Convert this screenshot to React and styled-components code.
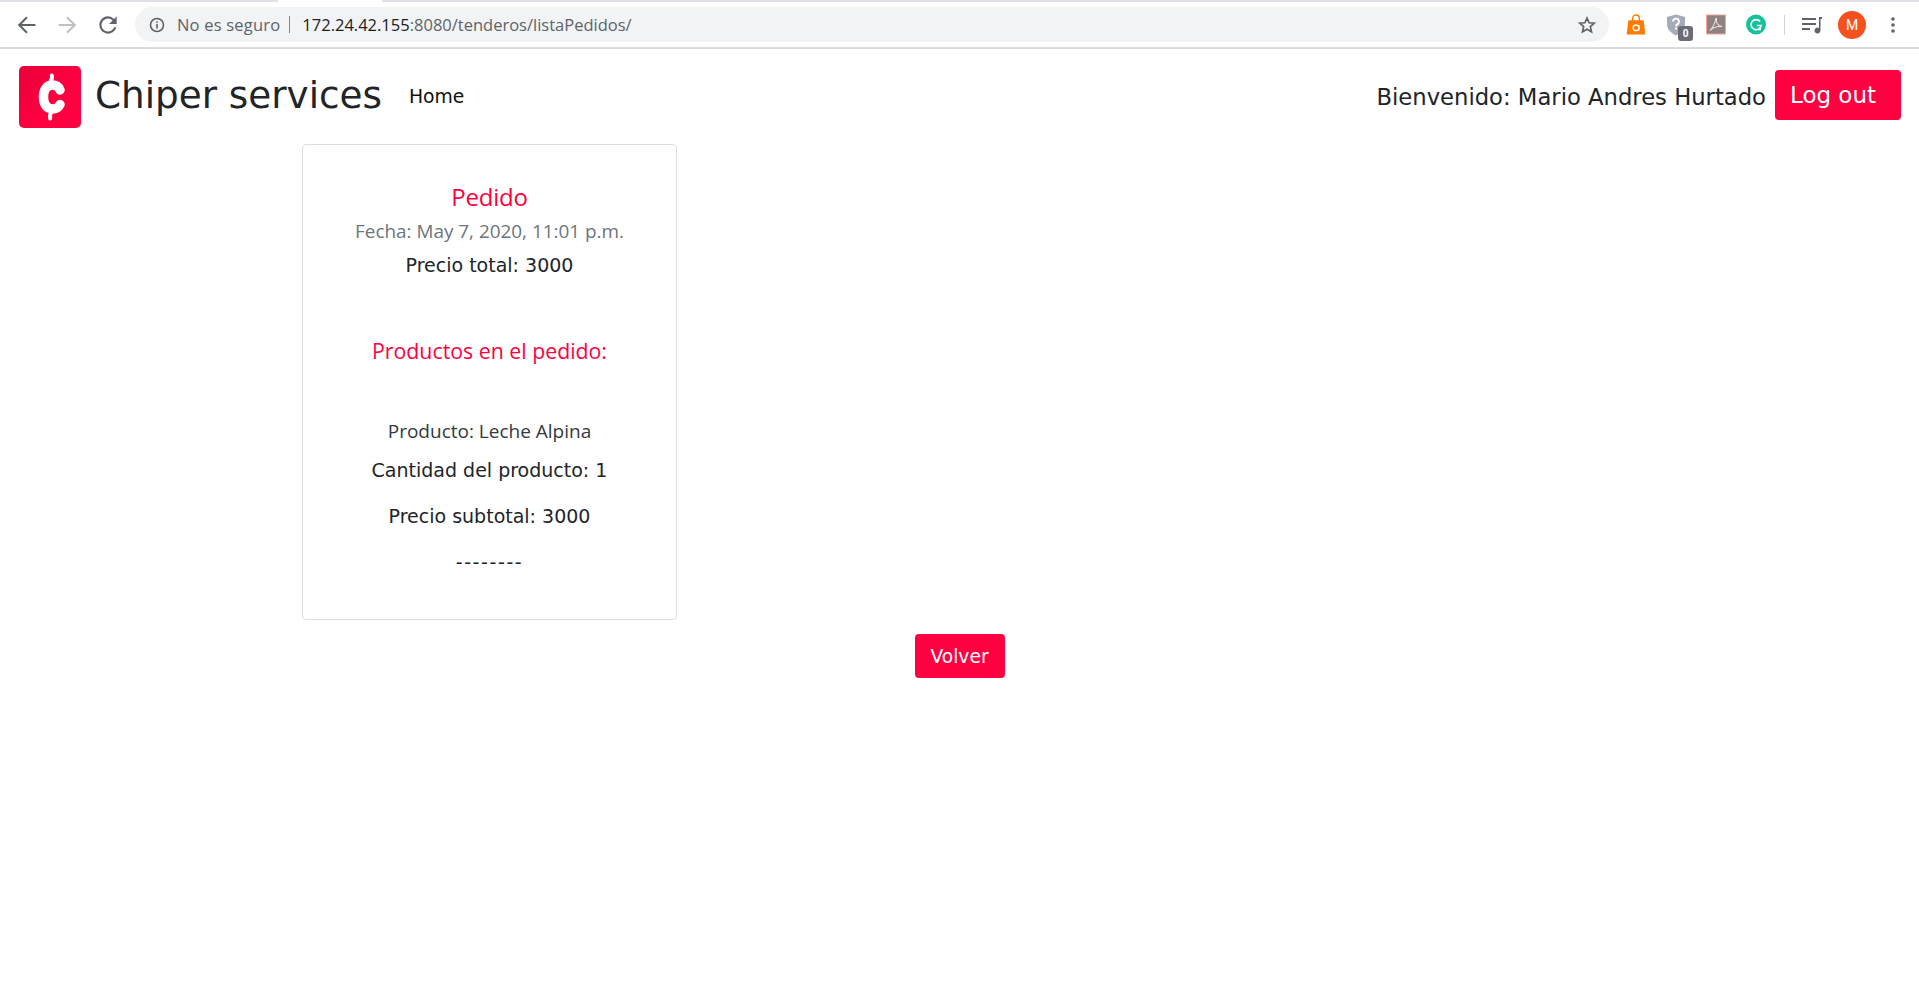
import React from 'react';
import styled, { createGlobalStyle } from 'styled-components';

const red = '#ff0040';

const GlobalStyle = createGlobalStyle`
  html, body {
    margin: 0;
    padding: 0;
    background: #fff;
  }
  body {
    font-family: "DejaVu Sans", sans-serif;
    color: #212529;
  }
`;

const TabStrip = styled.div`
  height: 2px;
  background: #dee1e6;
  display: flex;
  padding-left: 278px;
`;

const ActiveTab = styled.div`
  width: 104px;
  background: #fff;
`;

const BrowserBar = styled.div`
  height: 47px;
  box-sizing: border-box;
  display: flex;
  align-items: center;
  background: #fff;
  border-bottom: 2px solid #dadce0;
`;

const NavIcons = styled.div`
  display: flex;
  align-items: center;
  gap: 16px;
  padding-left: 15px;
  width: 135px;
  box-sizing: border-box;
`;

const Omnibox = styled.div`
  width: 1474px;
  height: 35px;
  border-radius: 18px;
  background: #f1f3f4;
  display: flex;
  align-items: center;
  padding: 0 12px 0 14px;
  box-sizing: border-box;
  font-family: "Open Sans", sans-serif;
  font-size: 16.5px;
  white-space: nowrap;
`;

const Secure = styled.span`
  color: #5f6368;
  margin-left: 12px;
  letter-spacing: 0.2px;
`;

const Divider = styled.span`
  width: 1px;
  height: 17px;
  background: #80868b;
  margin: 0 12px 0 9px;
`;

const Host = styled.span`
  color: #202124;
`;

const UrlRest = styled.span`
  color: #5f6368;
`;

const StarSlot = styled.span`
  margin-left: auto;
  display: flex;
`;

const Extensions = styled.div`
  display: flex;
  align-items: center;
  flex: 1;
  padding-left: 17px;
`;

const ExtSlot = styled.div`
  position: relative;
  width: 20px;
  height: 22px;
  margin-right: 20px;
  display: flex;
  align-items: center;
  justify-content: center;
`;

const Badge = styled.span`
  position: absolute;
  right: -7px;
  bottom: -5px;
  width: 15px;
  height: 15px;
  border-radius: 3px;
  background: #6b6c78;
  color: #fff;
  font-family: "Roboto", sans-serif;
  font-weight: 700;
  font-size: 10px;
  line-height: 15px;
  text-align: center;
`;

const BarSeparator = styled.div`
  width: 1px;
  height: 20px;
  background: #d0d3d6;
  margin: 0 17px 0 -2px;
`;

const Avatar = styled.div`
  width: 28px;
  height: 28px;
  border-radius: 50%;
  background: #f4511e;
  color: #fff;
  font-family: "Roboto", sans-serif;
  font-size: 14px;
  line-height: 28px;
  text-align: center;
  margin: 0 25px 0 -4px;
`;

const Navbar = styled.nav`
  height: 95px;
  box-sizing: border-box;
  display: flex;
  align-items: center;
  padding: 0 18px 4px 19px;
`;

const LogoBox = styled.div`
  width: 62px;
  height: 62px;
  border-radius: 5px;
  background: linear-gradient(135deg, #e8003a, ${red} 60%);
  display: flex;
  align-items: center;
  justify-content: center;
  margin-top: 5px;
`;

const Brand = styled.a`
  font-size: 37.3px;
  color: #212529;
  margin-left: 14px;
  white-space: nowrap;
`;

const NavLink = styled.a`
  font-size: 18.8px;
  color: #111;
  margin: 4px 0 0 27px;
`;

const Welcome = styled.span`
  margin: 4px 0 0 auto;
  font-size: 22.7px;
  color: #212529;
  white-space: nowrap;
`;

const LogoutButton = styled.button`
  width: 126px;
  height: 50px;
  margin-left: 9px;
  padding: 0 10px 0 0;
  border: none;
  border-radius: 4px;
  background: ${red};
  color: #fff;
  font-family: inherit;
  font-size: 23px;
`;

const Main = styled.main`
  padding-left: 302px;
`;

const Card = styled.section`
  width: 375px;
  height: 476px;
  box-sizing: border-box;
  border: 1px solid #dfdfdf;
  border-radius: 4px;
  background: #fff;
  padding-top: 37px;
  display: flex;
  flex-direction: column;
  align-items: center;
`;

const CardTitle = styled.h5`
  margin: 0;
  font-family: "Open Sans", sans-serif;
  font-weight: 400;
  font-size: 24px;
  line-height: 30px;
  color: ${red};
  letter-spacing: -0.2px;
`;

const CardSubtitle = styled.h6`
  margin: 6px 0 0;
  font-family: "Open Sans", sans-serif;
  font-weight: 400;
  font-size: 18.9px;
  line-height: 27px;
  color: #6c757d;
`;

const Line = styled.p`
  margin: ${(p) => p.$top}px 0 0;
  font-size: 19px;
  line-height: 26px;
  color: #212529;
  letter-spacing: ${(p) => p.$spacing || 0}px;
`;

const Section = styled.h5`
  margin: 58px 0 0;
  font-family: "Open Sans", sans-serif;
  font-weight: 400;
  font-size: 21.3px;
  line-height: 30px;
  color: ${red};
`;

const ProductName = styled.p`
  margin: 52px 0 0;
  font-family: "Open Sans", sans-serif;
  font-size: 19px;
  line-height: 27px;
  color: #343a40;
`;

const Actions = styled.div`
  display: flex;
  justify-content: center;
  padding-top: 14px;
`;

const BackButton = styled.button`
  width: 90px;
  height: 44px;
  border: none;
  border-radius: 4px;
  background: ${red};
  color: #fff;
  font-family: inherit;
  font-size: 18.7px;
`;

const ArrowIcon = ({ color, flip }) => (
  <svg width="24" height="24" viewBox="0 0 20 20" style={flip ? { transform: 'scaleX(-1)' } : undefined}>
    <path d="M17 10H4M10 3.5 3.5 10l6.5 6.5" fill="none" stroke={color} strokeWidth="1.7" />
  </svg>
);

const ReloadIcon = () => (
  <svg width="26" height="26" viewBox="0 0 24 24">
    <path
      fill="#5f6368"
      d="M17.65 6.35A7.96 7.96 0 0 0 12 4a8 8 0 1 0 7.73 10h-2.08A6 6 0 1 1 12 6c1.66 0 3.14.69 4.22 1.78L13 11h7V4l-2.35 2.35z"
    />
  </svg>
);

const InfoIcon = () => (
  <svg width="16" height="16" viewBox="0 0 16 16">
    <circle cx="8" cy="8" r="6.5" fill="none" stroke="#5f6368" strokeWidth="1.6" />
    <path d="M7.2 7h1.6v4.5H7.2zM7.2 4.4h1.6V6H7.2z" fill="#5f6368" />
  </svg>
);

const StarIcon = () => (
  <svg width="20" height="20" viewBox="0 0 24 24">
    <path
      fill="none"
      stroke="#5f6368"
      strokeWidth="2"
      d="M12 3.6l2.5 5.7 6.2.6-4.7 4.1 1.4 6.1L12 17l-5.4 3.100 1.4-6.100-4.700-4.100 6.200-.6z"
    />
  </svg>
);

const BagIcon = () => (
  <svg width="21" height="22" viewBox="0 0 21 22">
    <path d="M2.5 6h16l1.8 15H.7z" fill="#ff7a00" />
    <path d="M7 7V4a3.500 3.500 0 0 1 7 0v3" fill="none" stroke="#ff7a00" strokeWidth="1.4" />
    <circle cx="10.5" cy="14" r="3" fill="none" stroke="#fff" strokeWidth="1.4" />
    <path d="M13.5 11v6" stroke="#fff" strokeWidth="1.4" />
  </svg>
);

const ShieldIcon = () => (
  <svg width="20" height="22" viewBox="0 0 20 22">
    <path d="M10 .5 19 3v7c0 5-3.500 9-9 11.500C4.500 19 1 15 1 10V3z" fill="#a6abb8" />
    <path d="M7 7.500a3 3 0 1 1 4.500 2.600c-1 .6-1.500 1-1.500 2.200" fill="none" stroke="#fff" strokeWidth="2" />
    <rect x="9" y="13.5" width="2" height="2" fill="#fff" />
  </svg>
);

const PdfIcon = () => (
  <svg width="21" height="21" viewBox="0 0 21 21">
    <rect x=".5" y=".5" width="20" height="20" fill="#8f8280" stroke="#f5a79f" />
    <path
      d="M4 16.500c2-1 4-4.500 5.500-9 .4-1.500.4-3.500 1-3.500s.8 1.500.3 3.500c1 3 3 4.500 6.200 5-3-.2-6.500.4-9 1.500-1.500.7-3 2.500-4 2.500z"
      fill="none"
      stroke="#e6e2e0"
      strokeWidth="1.1"
    />
  </svg>
);

const GrammarlyIcon = () => (
  <svg width="21" height="21" viewBox="0 0 21 21">
    <circle cx="10.5" cy="10.5" r="10.5" fill="#15c39a" />
    <path d="M14.8 7.400a5.300 5.300 0 1 0 1 4.200h-4.300" fill="none" stroke="#fff" strokeWidth="1.7" />
    <path d="M15 13.200v2.600h-2.600" fill="none" stroke="#fff" strokeWidth="1.4" />
  </svg>
);

const MediaIcon = () => (
  <svg width="20" height="20" viewBox="0 0 20 20">
    <path d="M0 3h14v2H0zM0 8h14v2H0zM0 13h8v2H0z" fill="#5f6368" />
    <path d="M17 2h3v2h-1.500v11.500a3 3 0 1 1-1.500-2.600z" fill="#5f6368" />
  </svg>
);

const MenuIcon = () => (
  <svg width="4" height="16" viewBox="0 0 4 16">
    <circle cx="2" cy="2" r="1.8" fill="#5f6368" />
    <circle cx="2" cy="8" r="1.8" fill="#5f6368" />
    <circle cx="2" cy="14" r="1.8" fill="#5f6368" />
  </svg>
);

const LogoMark = () => (
  <svg width="30" height="50" viewBox="0 0 30 50">
    <path
      d="M25 18C23.500 14.500 20.500 13 17.500 13 11.500 13 8.500 18 8.500 25s3 12 9 12c3 0 6-1.500 7.500-4.500"
      fill="none"
      stroke="#fff"
      strokeWidth="9.5"
      strokeLinecap="round"
    />
    <path d="M16 8C17 7 17.300 5.500 16.800 3.500M15.500 41.500c-.5 1.500-.6 3-.3 5" fill="none" stroke="#fff" strokeWidth="4" strokeLinecap="round" />
  </svg>
);

export default function App() {
  return (
    <>
      <GlobalStyle />
      <TabStrip>
        <ActiveTab />
      </TabStrip>
      <BrowserBar>
        <NavIcons>
          <ArrowIcon color="#5f6368" />
          <ArrowIcon color="#bdc1c6" flip />
          <ReloadIcon />
        </NavIcons>
        <Omnibox>
          <InfoIcon />
          <Secure>No es seguro</Secure>
          <Divider />
          <Host>172.24.42.155</Host>
          <UrlRest>:8080/tenderos/listaPedidos/</UrlRest>
          <StarSlot>
            <StarIcon />
          </StarSlot>
        </Omnibox>
        <Extensions>
          <ExtSlot>
            <BagIcon />
          </ExtSlot>
          <ExtSlot>
            <ShieldIcon />
            <Badge>0</Badge>
          </ExtSlot>
          <ExtSlot>
            <PdfIcon />
          </ExtSlot>
          <ExtSlot>
            <GrammarlyIcon />
          </ExtSlot>
          <BarSeparator />
          <ExtSlot>
            <MediaIcon />
          </ExtSlot>
          <Avatar>M</Avatar>
          <MenuIcon />
        </Extensions>
      </BrowserBar>
      <Navbar>
        <LogoBox>
          <LogoMark />
        </LogoBox>
        <Brand>Chiper services</Brand>
        <NavLink>Home</NavLink>
        <Welcome>Bienvenido: Mario Andres Hurtado</Welcome>
        <LogoutButton>Log out</LogoutButton>
      </Navbar>
      <Main>
        <Card>
          <CardTitle>Pedido</CardTitle>
          <CardSubtitle>Fecha: May 7, 2020, 11:01 p.m.</CardSubtitle>
          <Line $top={7}>Precio total: 3000</Line>
          <Section>Productos en el pedido:</Section>
          <ProductName>Producto: Leche Alpina</ProductName>
          <Line $top={12}>Cantidad del producto: 1</Line>
          <Line $top={20}>Precio subtotal: 3000</Line>
          <Line $top={20} $spacing={1.6}>--------</Line>
        </Card>
      </Main>
      <Actions>
        <BackButton>Volver</BackButton>
      </Actions>
    </>
  );
}
